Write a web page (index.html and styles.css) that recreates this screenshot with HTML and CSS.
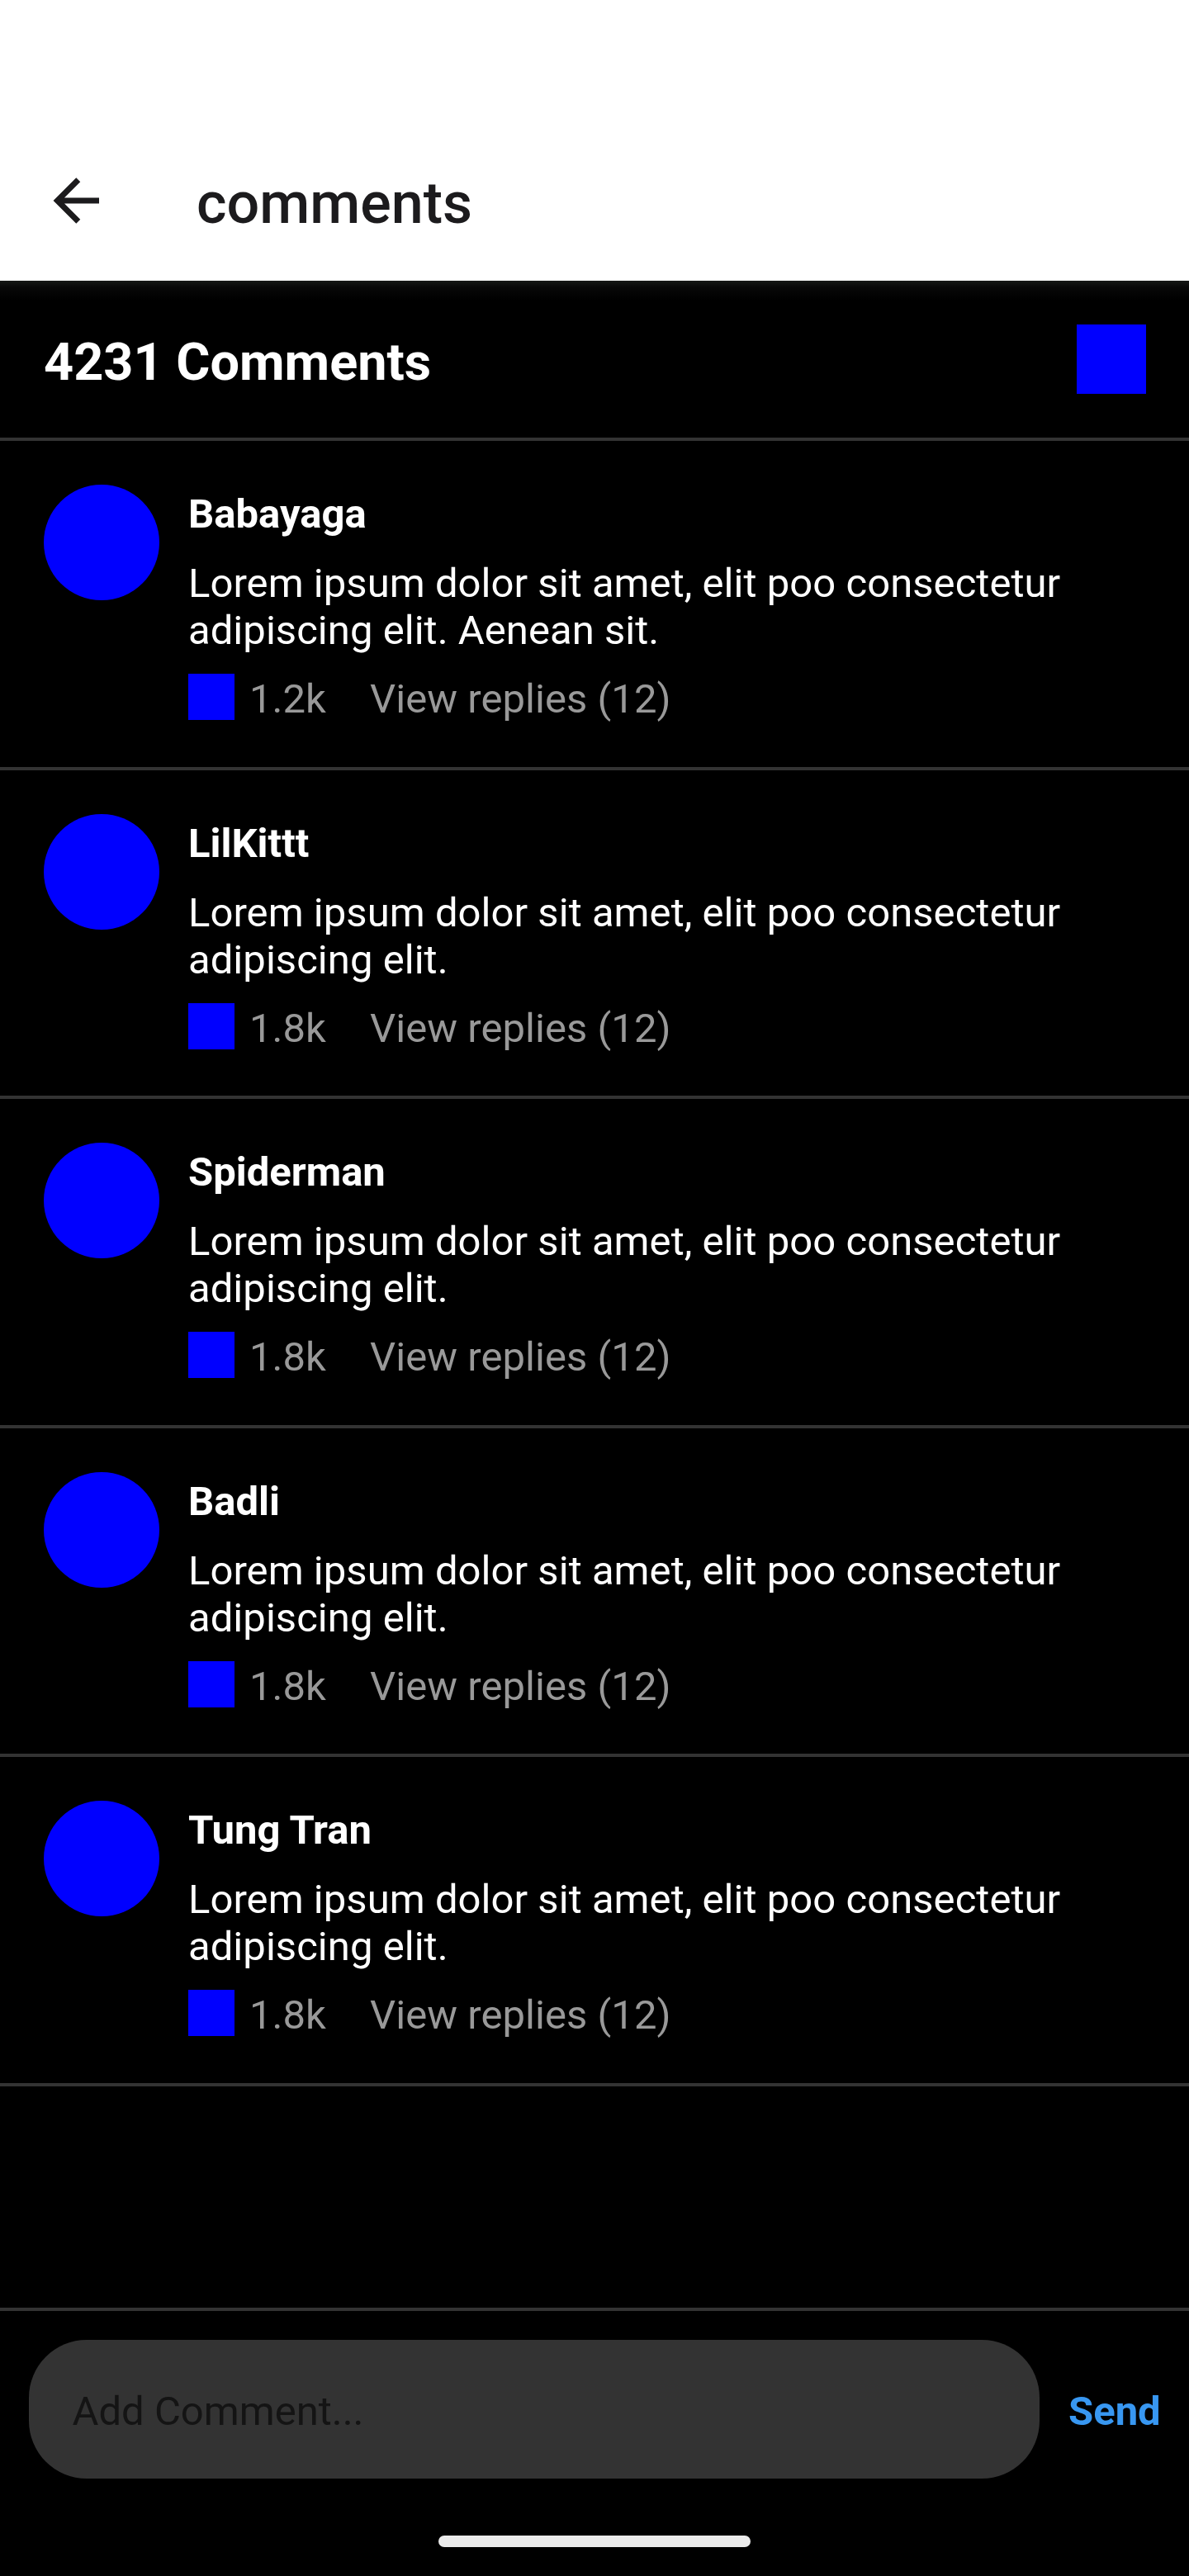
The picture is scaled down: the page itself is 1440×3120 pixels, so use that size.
FILE: index.html
```html
<!DOCTYPE html>
<html lang="en">
<head>
<meta charset="utf-8">
<title>comments</title>
<link rel="stylesheet" href="styles.css">
</head>
<body>
<div class="screen">
  <header class="app-bar">
    <svg class="back" viewBox="0 0 24 24" role="img" aria-label="Back"><path d="M20,11V13H8L13.5,18.5L12.08,19.92L4.16,12L12.08,4.08L13.5,5.5L8,11H20Z"/></svg>
    <h1 class="title">comments</h1>
  </header>
  <div class="summary">
    <h2 class="count">4231 Comments</h2>
    <span class="close"></span>
  </div>
  <main class="list">
    <article class="comment">
      <span class="avatar"></span>
      <div class="body">
        <h3 class="name">Babayaga</h3>
        <p class="text">Lorem ipsum dolor sit amet, elit poo consectetur<br>adipiscing elit. Aenean sit.</p>
        <div class="meta"><span class="like"></span><span class="likes">1.2k</span><span class="replies">View replies (12)</span></div>
      </div>
    </article>
    <article class="comment">
      <span class="avatar"></span>
      <div class="body">
        <h3 class="name">LilKittt</h3>
        <p class="text">Lorem ipsum dolor sit amet, elit poo consectetur<br>adipiscing elit.</p>
        <div class="meta"><span class="like"></span><span class="likes">1.8k</span><span class="replies">View replies (12)</span></div>
      </div>
    </article>
    <article class="comment">
      <span class="avatar"></span>
      <div class="body">
        <h3 class="name">Spiderman</h3>
        <p class="text">Lorem ipsum dolor sit amet, elit poo consectetur<br>adipiscing elit.</p>
        <div class="meta"><span class="like"></span><span class="likes">1.8k</span><span class="replies">View replies (12)</span></div>
      </div>
    </article>
    <article class="comment">
      <span class="avatar"></span>
      <div class="body">
        <h3 class="name">Badli</h3>
        <p class="text">Lorem ipsum dolor sit amet, elit poo consectetur<br>adipiscing elit.</p>
        <div class="meta"><span class="like"></span><span class="likes">1.8k</span><span class="replies">View replies (12)</span></div>
      </div>
    </article>
    <article class="comment">
      <span class="avatar"></span>
      <div class="body">
        <h3 class="name">Tung Tran</h3>
        <p class="text">Lorem ipsum dolor sit amet, elit poo consectetur<br>adipiscing elit.</p>
        <div class="meta"><span class="like"></span><span class="likes">1.8k</span><span class="replies">View replies (12)</span></div>
      </div>
    </article>
  </main>
  <footer class="composer">
    <div class="field">Add Comment...</div>
    <span class="send">Send</span>
  </footer>
  <div class="nav"><span class="handle"></span></div>
</div>
</body>
</html>
```

FILE: styles.css
```css
* { box-sizing: border-box; }
body { margin: 0; background: #000; }
h1, h2, h3, p { margin: 0; }
.screen {
  display: flex;
  flex-direction: column;
  width: 1440px;
  height: 3120px;
  background: #000;
  color: #fff;
  font-family: Roboto, "Liberation Sans", sans-serif;
  font-size: 49px;
  line-height: 57px;
}
.app-bar {
  display: flex;
  align-items: center;
  height: 340px;
  padding: 146px 50px 0;
  gap: 104px;
  background: #fff;
  color: #1c1b1d;
}
.back { width: 84px; height: 84px; fill: currentColor; }
.title { font-size: 70px; line-height: 84px; font-weight: 500; margin-top: 6px; }
.summary {
  display: flex;
  align-items: center;
  justify-content: space-between;
  height: 194px;
  padding: 0 52px 0 53px;
  border-bottom: 4px solid #333;
  background: linear-gradient(#161816, #080808 8px, #000 24px);
}
.count { font-size: 63px; line-height: 74px; font-weight: 700; padding-top: 7px; }
.close { width: 84px; height: 84px; background: #00f; }
.list { flex: 1; }
.comment {
  display: flex;
  gap: 35px;
  height: 398.5px;
  padding: 53px 52px 0 53px;
  border-bottom: 4px solid #333;
}
.avatar { width: 140px; height: 140px; border-radius: 50%; background: #00f; }
.body { padding-top: 7px; }
.name { font-size: 49px; line-height: 57px; font-weight: 700; }
.text { margin-top: 27px; letter-spacing: 0.04px; }
.meta { display: flex; height: 57px; margin-top: 26px; color: #999; letter-spacing: 0.04px; }
.like { width: 56px; height: 56px; margin-top: -2px; background: #00f; }
.likes { margin-left: 18px; }
.replies { margin-left: 53px; }
.composer {
  display: flex;
  align-items: center;
  gap: 35px;
  height: 242px;
  padding: 0 35px;
  border-top: 4px solid #333;
}
.field {
  flex: 1;
  height: 168px;
  padding: 58px 52.5px 53px;
  border-radius: 70px;
  background: #333;
  color: #141414;
}
.send { width: 111px; padding-top: 5px; color: #3897f1; font-weight: 700; }
.nav { display: flex; justify-content: center; height: 83px; padding-top: 34px; }
.handle { width: 378px; height: 14px; border-radius: 7px; background: #ebebeb; }
```
